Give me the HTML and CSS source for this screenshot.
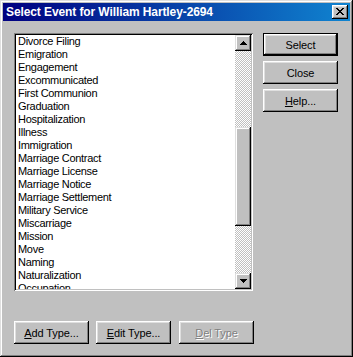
FILE: index.html
```html
<!DOCTYPE html>
<html>
<head>
<meta charset="utf-8">
<link rel="stylesheet" href="styles.css">
</head>
<body>
<div class="window">
  <div class="titlebar">
    <span class="title">Select Event for William Hartley-2694</span>
    <button class="close" aria-label="Close">
      <svg width="8" height="7" viewBox="0 0 8 7" shape-rendering="crispEdges"><path d="M0 0h2v1H0zM6 0h2v1H6zM1 1h2v1H1zM5 1h2v1H5zM2 2h4v1H2zM3 3h2v1H3zM2 4h4v1H2zM1 5h2v1H1zM5 5h2v1H5zM0 6h2v1H0zM6 6h2v1H6z" fill="#000"/></svg>
    </button>
  </div>
  <div class="content">
    <div class="listbox">
      <ul class="items">
        <li>Divorce Filing</li>
        <li>Emigration</li>
        <li>Engagement</li>
        <li>Excommunicated</li>
        <li>First Communion</li>
        <li>Graduation</li>
        <li>Hospitalization</li>
        <li>Illness</li>
        <li>Immigration</li>
        <li>Marriage Contract</li>
        <li>Marriage License</li>
        <li>Marriage Notice</li>
        <li>Marriage Settlement</li>
        <li>Military Service</li>
        <li>Miscarriage</li>
        <li>Mission</li>
        <li>Move</li>
        <li>Naming</li>
        <li>Naturalization</li>
        <li>Occupation</li>
      </ul>
      <div class="scrollbar">
        <div class="arrow-btn">
          <svg width="7" height="4" viewBox="0 0 7 4" shape-rendering="crispEdges"><path d="M3 0h1v1H3zM2 1h3v1H2zM1 2h5v1H1zM0 3h7v1H0z" fill="#000"/></svg>
        </div>
        <div class="track">
          <div class="track-before"></div>
          <div class="thumb"></div>
          <div class="track-after"></div>
        </div>
        <div class="arrow-btn">
          <svg width="7" height="4" viewBox="0 0 7 4" shape-rendering="crispEdges"><path d="M0 0h7v1H0zM1 1h5v1H1zM2 2h3v1H2zM3 3h1v1H3z" fill="#000"/></svg>
        </div>
      </div>
    </div>
    <div class="side">
      <button class="btn default">Select</button>
      <button class="btn">Close</button>
      <button class="btn"><u>H</u>elp...</button>
    </div>
  </div>
  <div class="bottom">
    <button class="btn"><u>A</u>dd Type...</button>
    <button class="btn"><u>E</u>dit Type...</button>
    <button class="btn disabled"><u>D</u>el Type</button>
  </div>
</div>
</body>
</html>
```
FILE: styles.css
```css
html, body {
  margin: 0;
  padding: 0;
  background: #c0c0c0;
}
.window {
  width: 353px;
  height: 357px;
  box-sizing: border-box;
  padding: 3px;
  background: #c0c0c0;
  box-shadow: inset -1px -1px #000, inset 1px 1px #dfdfdf, inset -2px -2px #808080, inset 2px 2px #fff;
  font-family: "Liberation Sans", Arial, sans-serif;
  font-size: 11px;
  color: #000;
}
.titlebar {
  height: 18px;
  display: flex;
  align-items: center;
  justify-content: space-between;
  padding: 0 2px 0 3px;
  background: linear-gradient(to right, #000080, #1084d0);
}
.title {
  color: #fff;
  font-weight: bold;
  font-size: 12px;
  letter-spacing: -0.1px;
}
.close {
  width: 16px;
  height: 14px;
  padding: 0;
  margin: 0;
  border: 0;
  background: #c0c0c0;
  box-shadow: inset -1px -1px #000, inset 1px 1px #fff, inset -2px -2px #808080, inset 2px 2px #dfdfdf;
  display: flex;
  align-items: center;
  justify-content: center;
}
.close svg {
  display: block;
  margin: 0 0 1px 0;
}
.content {
  display: flex;
  padding: 12px 0 0 11px;
}
.listbox {
  width: 239px;
  height: 258px;
  box-sizing: border-box;
  padding: 2px;
  background: #fff;
  box-shadow: inset 1px 1px #808080, inset -1px -1px #fff, inset 2px 2px #000, inset -2px -2px #c0c0c0;
  display: flex;
}
.items {
  list-style: none;
  margin: 0;
  padding: 0 0 0 2px;
  flex: 1;
  overflow: hidden;
  line-height: 13px;
  letter-spacing: -0.3px;
}
.items li {
  height: 13px;
  white-space: nowrap;
}
.scrollbar {
  width: 16px;
  display: flex;
  flex-direction: column;
}
.arrow-btn {
  width: 16px;
  height: 16px;
  box-sizing: border-box;
  background: #c0c0c0;
  box-shadow: inset -1px -1px #000, inset 1px 1px #dfdfdf, inset -2px -2px #808080, inset 2px 2px #fff;
  display: flex;
  align-items: center;
  justify-content: center;
}
.arrow-btn svg {
  display: block;
}
.track {
  flex: 1;
  display: flex;
  flex-direction: column;
  background: repeating-conic-gradient(#c0c0c0 0 25%, #fff 0 50%) 0 0 / 2px 2px;
}
.track-before {
  height: 76px;
}
.thumb {
  height: 99px;
  background: #c0c0c0;
  box-shadow: inset -1px -1px #000, inset 1px 1px #dfdfdf, inset -2px -2px #808080, inset 2px 2px #fff;
}
.track-after {
  flex: 1;
}
.side {
  display: flex;
  flex-direction: column;
  gap: 5px;
  margin-left: 10px;
}
.btn {
  width: 75px;
  height: 23px;
  padding: 0;
  margin: 0;
  border: 0;
  background: #c0c0c0;
  font-family: "Liberation Sans", Arial, sans-serif;
  font-size: 11px;
  color: #000;
  letter-spacing: -0.1px;
  box-shadow: inset -1px -1px #000, inset 1px 1px #fff, inset -2px -2px #808080, inset 2px 2px #dfdfdf;
}
.btn.default {
  box-shadow: inset 0 0 0 1px #000, inset -2px -2px #000, inset 2px 2px #fff, inset -3px -3px #808080, inset 3px 3px #dfdfdf;
}
.btn u {
  text-decoration: underline;
  text-underline-offset: 1px;
}
.btn.disabled {
  color: #808080;
  text-shadow: 1px 1px 0 #fff;
}
.bottom {
  display: flex;
  gap: 8px;
  padding: 30px 0 0 11px;
}
.bottom .btn + .btn {
  margin-left: -1px;
}
.bottom .btn:last-child {
  margin-left: 0;
}
```
